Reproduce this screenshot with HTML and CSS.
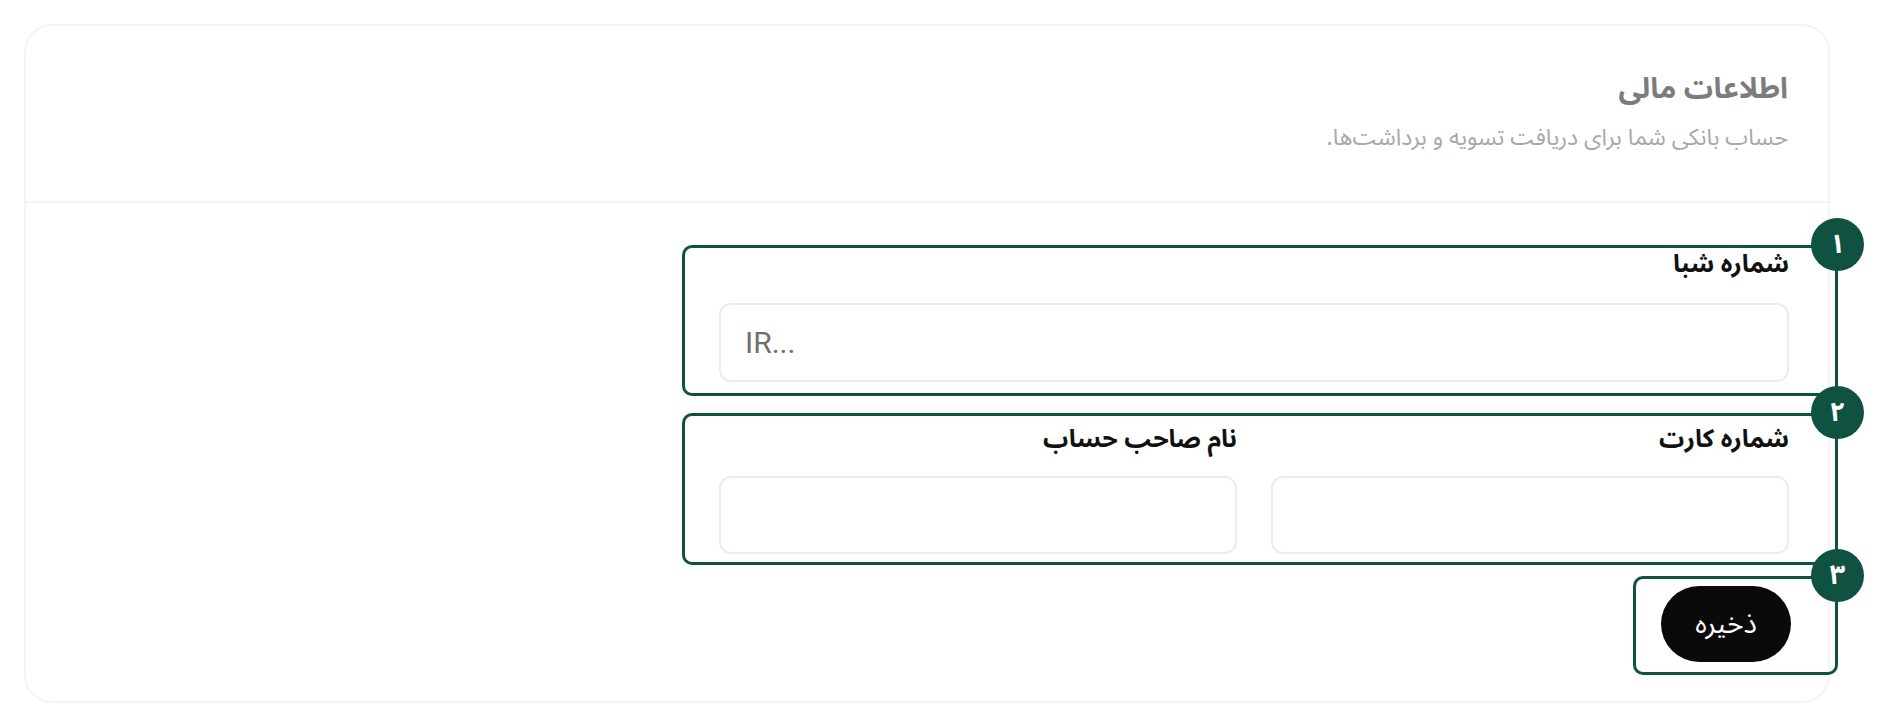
FILE: index.html
```html
<!DOCTYPE html>
<html lang="fa" dir="rtl">
<head>
<meta charset="utf-8">
<title>اطلاعات مالی</title>
<link rel="stylesheet" href="styles.css">
</head>
<body>
<section class="card">
  <header class="card-head">
    <h2 class="title">اطلاعات مالی</h2>
    <p class="subtitle">حساب بانکی شما برای دریافت تسویه و برداشت‌ها.</p>
  </header>
  <div class="card-body">
    <div class="mark mark-1">
      <span class="badge">۱</span>
      <label class="label">شماره شبا</label>
      <input class="field ltr" type="text" placeholder="IR...">
    </div>
    <div class="mark mark-2">
      <span class="badge">۲</span>
      <div class="cols">
        <div class="col">
          <label class="label">شماره کارت</label>
          <input class="field" type="text">
        </div>
        <div class="col">
          <label class="label">نام صاحب حساب</label>
          <input class="field" type="text">
        </div>
      </div>
    </div>
    <div class="mark mark-3">
      <span class="badge">۳</span>
      <button class="save" type="button">ذخیره</button>
    </div>
  </div>
</section>
</body>
</html>
```
FILE: styles.css
```css
* { box-sizing: border-box; }
html, body { margin: 0; padding: 0; background: #ffffff; }
body {
  font-family: "Noto Sans Arabic", "DejaVu Sans", sans-serif;
  color: #111111;
}
.card {
  margin: 24px 51px 0 24px;
  height: 679px;
  border: 2px solid #f4f4f4;
  border-radius: 28px;
  background: #ffffff;
}
.card-head {
  padding: 43px 40px 48px 40px;
  border-bottom: 2px solid #f4f4f4;
}
.title {
  margin: 0;
  font-size: 29px;
  line-height: 39px;
  font-weight: 700;
  color: #7c7c7c;
}
.subtitle {
  margin: 15px 0 0 0;
  font-size: 23px;
  line-height: 30px;
  color: #a8a8a8;
}
.card-body {
  padding: 42px 0 0 0;
  display: flex;
  flex-direction: column;
  align-items: flex-start;
}
.mark {
  position: relative;
  border: 3px solid #105242;
  border-radius: 10px;
  margin-right: -10px;
}
.mark-1 {
  width: 1156px;
  padding: 1px 46px 11px 34px;
  display: flex;
  flex-direction: column;
}
.mark-2 {
  width: 1156px;
  margin-top: 17px;
  padding: 8px 46px 8px 34px;
}
.mark-3 {
  margin-top: 11px;
  padding: 7px 44px 10px 25px;
}
.badge {
  position: absolute;
  top: -30px;
  right: -29px;
  width: 53px;
  height: 53px;
  border-radius: 50%;
  background: #105242;
  color: #ffffff;
  font-size: 27px;
  font-weight: 700;
  display: flex;
  align-items: center;
  justify-content: center;
}
.label {
  display: block;
  font-size: 25px;
  line-height: 30px;
  font-weight: 700;
  color: #111111;
}
.mark-1 .label { margin-bottom: 24px; }
.mark-2 .label { margin-bottom: 22px; }
.field {
  display: block;
  width: 100%;
  height: 79px;
  border: 2px solid #ececec;
  border-radius: 12px;
  background: #ffffff;
  font-family: Roboto, "DejaVu Sans", sans-serif;
  font-size: 30px;
  padding: 0 24px;
  outline: none;
}
.mark-2 .field { height: 78px; }
.field.ltr { direction: ltr; text-align: left; }
.field::placeholder { color: #6f6f6f; }
.cols {
  display: grid;
  grid-template-columns: 1fr 1fr;
  column-gap: 34px;
}
.save {
  width: 130px;
  height: 76px;
  border: none;
  border-radius: 38px;
  background: #0a0a0a;
  color: #ffffff;
  font-family: "Noto Sans Arabic", "DejaVu Sans", sans-serif;
  font-size: 28px;
  padding: 0;
}
```
